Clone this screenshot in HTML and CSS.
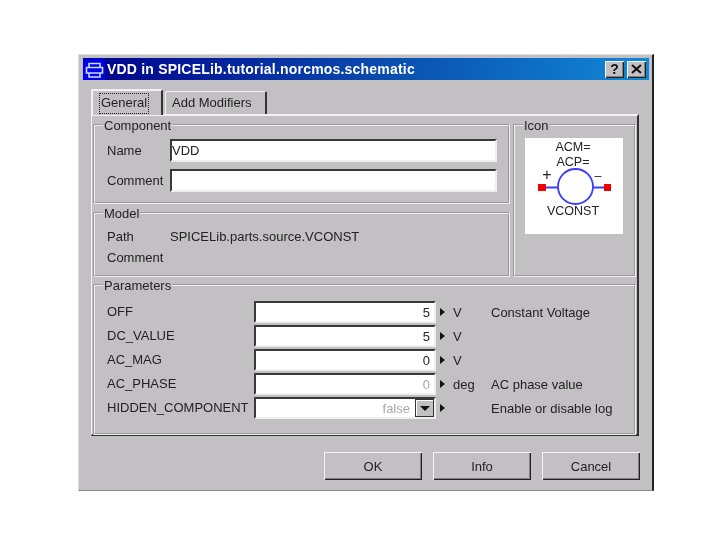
FILE: index.html
```html
<!DOCTYPE html>
<html lang="en">
	<head>
		<meta charset="UTF-8">
		<title>VDD in SPICELib.tutorial.norcmos.schematic</title>
		<link rel="stylesheet" href="styles.css">
	</head>
	<body>
		<div class="dialog">
			<div class="titlebar">
				<span class="title-icon">
					<svg width="22" height="21" viewBox="0 0 22 21">
						<rect x="0" y="0" width="22" height="21" fill="#0000e8"/>
						<path d="M6 8.500V4.500h11V8.500M3.500 8.500h16v5.500h-16zM6 14v4h11V14" fill="none" stroke="#c8dcff" stroke-width="1.600"/>
					</svg>
				</span>
				<span class="title-text">VDD in SPICELib.tutorial.norcmos.schematic</span>
				<span class="title-btn">?</span>
				<span class="title-btn close">
					<svg width="11" height="10" viewBox="0 0 11 10"><path d="M1 1l9 8M10 1L1 9" stroke="#111" stroke-width="2" fill="none"/></svg>
				</span>
			</div>

			<div class="tabs">
				<div class="tab active"><span class="focus">General</span></div>
				<div class="tab">Add Modifiers</div>
			</div>

			<div class="panel">
				<div class="top">
					<div class="left">
						<fieldset class="group component">
							<legend>Component</legend>
							<div class="field"><label>Name</label><input class="box" type="text" value="VDD"></div>
							<div class="field"><label>Comment</label><input class="box" type="text"></div>
						</fieldset>
						<fieldset class="group model">
							<legend>Model</legend>
							<div class="info"><span>Path</span><span>SPICELib.parts.source.VCONST</span></div>
							<div class="info"><span>Comment</span><span></span></div>
						</fieldset>
					</div>
					<fieldset class="group icon">
						<legend>Icon</legend>
						<div class="preview">
							<svg width="98" height="96" viewBox="0 0 98 96">
								<text x="48" y="13" class="sym" text-anchor="middle">ACM=</text>
								<text x="48" y="28" class="sym" text-anchor="middle">ACP=</text>
								<text x="22" y="42" class="sym plus" text-anchor="middle">+</text>
								<text x="73" y="42" class="sym" text-anchor="middle">–</text>
								<circle cx="50.500" cy="48.500" r="17.500" fill="none" stroke="#3c3cff" stroke-width="1.800"/>
								<path d="M17 49.500h16M68 49.500h15" stroke="#3c3cff" stroke-width="1.800"/>
								<rect x="13" y="46" width="8" height="7" fill="#f00000"/>
								<rect x="79" y="46" width="7" height="7" fill="#f00000"/>
								<text x="48" y="77" class="sym" text-anchor="middle">VCONST</text>
							</svg>
						</div>
					</fieldset>
				</div>

				<fieldset class="group params">
					<legend>Parameters</legend>
					<div class="param">
						<label>OFF</label><input class="box num" type="text" value="5"><span class="arrow"></span><span class="unit">V</span><span class="desc">Constant Voltage</span>
					</div>
					<div class="param">
						<label>DC_VALUE</label><input class="box num" type="text" value="5"><span class="arrow"></span><span class="unit">V</span><span class="desc"></span>
					</div>
					<div class="param">
						<label>AC_MAG</label><input class="box num" type="text" value="0"><span class="arrow"></span><span class="unit">V</span><span class="desc"></span>
					</div>
					<div class="param">
						<label>AC_PHASE</label><input class="box num off" type="text" value="0" disabled><span class="arrow"></span><span class="unit">deg</span><span class="desc">AC phase value</span>
					</div>
					<div class="param">
						<label>HIDDEN_COMPONENT</label>
						<div class="box combo"><span>false</span><span class="drop"></span></div>
						<span class="arrow"></span><span class="unit"></span><span class="desc">Enable or disable log</span>
					</div>
				</fieldset>
			</div>

			<div class="actions">
				<button type="button">OK</button>
				<button type="button">Info</button>
				<button type="button">Cancel</button>
			</div>
		</div>
	</body>
</html>
```

FILE: styles.css
```css
body{
	margin: 0;
	background-color: white;
	font-family: "Liberation Sans", Arial, sans-serif;
	font-size: 13px;
	color: #222;
}
.dialog{
	box-sizing: border-box;
	width: 576px;
	height: 437px;
	margin: 54px 0 0 78px;
	padding: 3px 3px 0 4px;
	background-color: #c3c0c3;
	border-top: 1px solid #dedcde;
	border-left: 1px solid #dedcde;
	border-right: 2px solid #222;
	border-bottom: 1px solid #8a888a;
	filter: blur(0.45px);
}
.titlebar{
	height: 22px;
	display: flex;
	align-items: center;
	background: linear-gradient(to right, #00008c 0%, #0a4fb0 55%, #1088d8 100%);
	color: white;
}
.title-icon{
	height: 21px;
	width: 22px;
}
.title-icon svg{
	display: block;
}
.title-text{
	flex: 1;
	margin-left: 2px;
	font-weight: bold;
	font-size: 14px;
	letter-spacing: 0.2px;
}
.title-btn{
	box-sizing: border-box;
	width: 19px;
	height: 17px;
	margin-right: 3px;
	display: flex;
	align-items: center;
	justify-content: center;
	background-color: #c3c0c3;
	color: #111;
	font-weight: bold;
	font-size: 14px;
	box-shadow: inset 1px 1px 0 #fff, inset -1px -1px 0 #222, inset -2px -2px 0 #808080;
}
.tabs{
	display: flex;
	align-items: flex-end;
	height: 26px;
	margin: 8px 0 0 8px;
}
.tab{
	box-sizing: border-box;
	width: 102px;
	height: 23px;
	margin-left: 2px;
	padding: 3px 0 0 6px;
	border-top: 1px solid #f2f2f2;
	border-left: 1px solid #f2f2f2;
	border-right: 2px solid #333;
	border-radius: 2px 2px 0 0;
}
.tab.active{
	width: 72px;
	height: 26px;
	margin-left: 0;
	padding: 2px 0 0 6px;
	border-top: 2px solid #f2f2f2;
	border-left: 2px solid #f2f2f2;
	position: relative;
	z-index: 1;
	margin-bottom: -1px;
	background-color: #c3c0c3;
}
.focus{
	display: inline-block;
	box-sizing: border-box;
	width: 50px;
	height: 21px;
	line-height: 18px;
	text-align: center;
	border: 1px dotted #222;
}
.panel{
	box-sizing: border-box;
	width: 548px;
	height: 322px;
	margin-left: 8px;
	padding: 2px 1px 0 1px;
	border-top: 2px solid #f2f2f2;
	border-left: 1px solid #f2f2f2;
	border-right: 2px solid #333;
	border-bottom: 2px solid #333;
}
.top{
	display: flex;
	gap: 3px;
	height: 159px;
}
.left{
	width: 417px;
	display: flex;
	flex-direction: column;
	gap: 2px;
}
.group{
	box-sizing: border-box;
	margin: 0;
	min-width: 0;
	border: 2px groove #eeeeee;
}
.group legend{
	margin-left: -4px;
	padding: 0 1px;
	height: 13px;
	line-height: 15px;
}
.component{
	height: 86px;
	padding: 8px 10px 0 12px;
}
.field{
	display: flex;
	align-items: center;
	height: 23px;
	margin-bottom: 7px;
}
.field label{
	width: 63px;
}
.box{
	box-sizing: border-box;
	margin: 0;
	padding: 0;
	background-color: white;
	font: inherit;
	color: inherit;
	border-top: 2px solid #3a3a3a;
	border-left: 2px solid #3a3a3a;
	border-right: 2px solid #eeeeee;
	border-bottom: 2px solid #eeeeee;
	border-radius: 0;
	outline: none;
}
.field .box{
	width: 327px;
	height: 23px;
}
.model{
	height: 71px;
	padding: 7px 0 0 12px;
}
.info{
	display: flex;
	align-items: center;
	height: 21px;
}
.info span:first-child{
	width: 63px;
}
.icon{
	width: 123px;
	height: 159px;
	padding: 7px 0 0 10px;
}
.icon legend{
	margin-left: -2px;
}
.preview{
	width: 98px;
	height: 96px;
	background-color: white;
}
.preview svg{
	display: block;
}
.sym{
	font-size: 12.5px;
	fill: #222;
}
.plus{
	font-size: 16px;
}
.params{
	width: 543px;
	height: 157px;
	margin-top: 1px;
	padding: 10px 0 0 12px;
}
.param{
	display: grid;
	grid-template-columns: 147px 182px 17px 38px auto;
	align-items: center;
	height: 22px;
	margin-bottom: 2px;
}
.param label{
	margin-top: -2px;
}
.param .box{
	height: 22px;
	width: 182px;
}
.num{
	padding-right: 4px;
	text-align: right;
}
.off{
	color: #a8a8a8;
}
.arrow{
	width: 0;
	height: 0;
	margin-left: 4px;
	border-left: 5px solid #111;
	border-top: 4px solid transparent;
	border-bottom: 4px solid transparent;
}
.combo{
	display: flex;
	align-items: center;
	justify-content: flex-end;
	gap: 5px;
	color: #a8a8a8;
}
.drop{
	box-sizing: border-box;
	width: 19px;
	height: 18px;
	display: flex;
	align-items: center;
	justify-content: center;
	background-color: #c3c0c3;
	box-shadow: inset 1px 1px 0 #333, inset -1px -1px 0 #333, inset 2px 2px 0 #fff;
}
.drop::after{
	content: "";
	border-top: 5px solid #111;
	border-left: 5px solid transparent;
	border-right: 5px solid transparent;
}
.actions{
	display: flex;
	justify-content: flex-end;
	gap: 11px;
	margin-top: 16px;
	margin-right: 9px;
}
button{
	appearance: none;
	width: 98px;
	height: 28px;
	padding: 0;
	border: none;
	background-color: #c3c0c3;
	font: inherit;
	color: inherit;
	box-shadow: inset 1px 1px 0 #f4f4f4, inset -1px -1px 0 #222, inset -2px -2px 0 #808080;
}
```
